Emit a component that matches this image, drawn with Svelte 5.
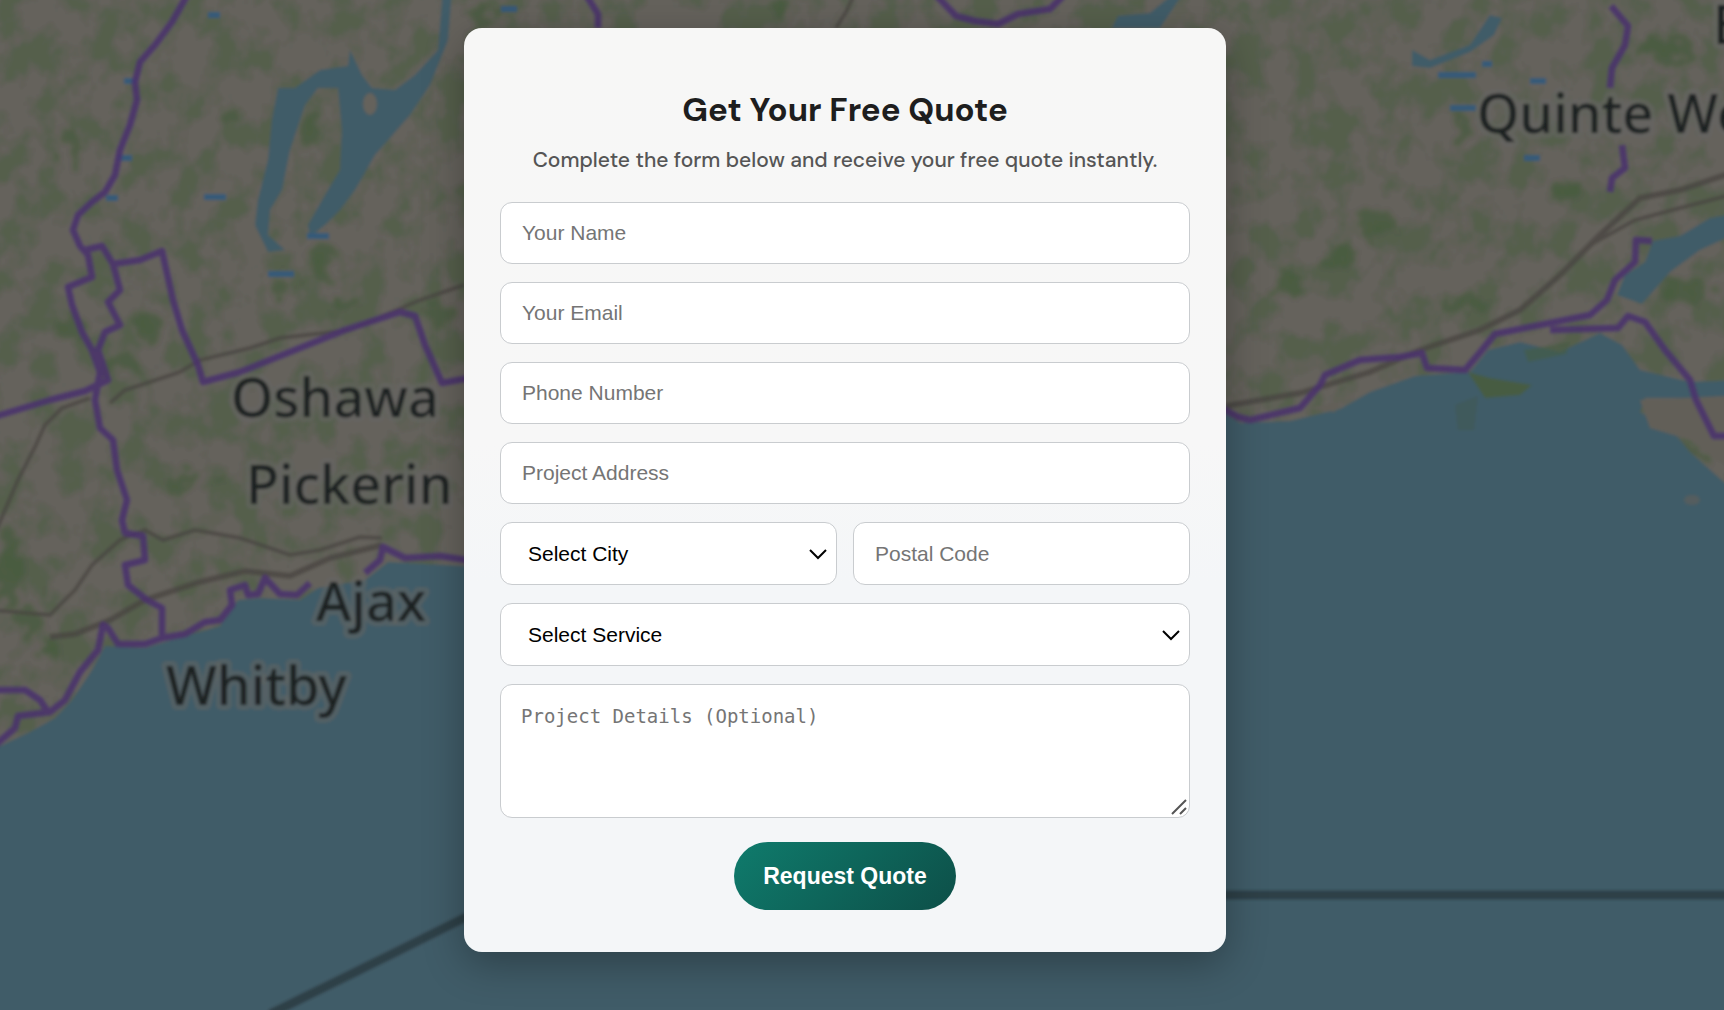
<section class="quote-section">
  <svg class="map" viewBox="0 0 1724 1010" preserveAspectRatio="xMidYMin slice" aria-hidden="true">
    <defs>
      <filter id="woods" x="0" y="0" width="100%" height="100%" color-interpolation-filters="sRGB">
        <feTurbulence type="fractalNoise" baseFrequency="0.034 0.027" numOctaves="4" seed="11" />
        <feColorMatrix values="0 0 0 0 0.29  0 0 0 0 0.36  0 0 0 0 0.26  4 0 0 0 -1.7" />
      </filter>
      <filter id="ragged" x="-5%" y="-5%" width="110%" height="110%">
        <feTurbulence type="fractalNoise" baseFrequency="0.05" numOctaves="3" seed="4" />
        <feDisplacementMap in="SourceGraphic" scale="40" xChannelSelector="R" yChannelSelector="G" />
        <feGaussianBlur stdDeviation="2" />
      </filter>
      <filter id="soft" x="0" y="0" width="100%" height="100%">
        <feGaussianBlur stdDeviation="1.8" />
      </filter>
    </defs>

    <g filter="url(#soft)">
      <rect x="-20" y="-20" width="1764" height="1050" fill="#65625c" />
      <rect x="-20" y="-20" width="1764" height="780" filter="url(#woods)" opacity="0.6" />

      <g class="forest" filter="url(#ragged)">
        {#each forests as [cx, cy, rx, ry]}
          <ellipse {cx} {cy} {rx} {ry} />
        {/each}
      </g>

      <g class="water">
        <path d="M-20 752L0 746L30 732L55 718L72 700L92 670L105 646L145 648L185 636L220 626L238 600L262 598L300 600L318 588L365 580L388 562L464 566L1226 414L1240 423L1290 421L1340 409L1370 392L1415 376L1470 372L1488 350L1520 342L1560 352L1600 333L1622 345L1640 370L1690 382L1744 380V398L1645 398L1640 412L1672 430L1690 452L1744 500V1030H-20Z" />
        <path d="M1653 241L1680 236L1710 218L1744 212V230L1700 250L1670 272L1642 304L1617 295L1625 275L1645 262Z" />
        <path d="M278 88L295 88L320 70L348 66L350 50L362 75L372 88L395 90L415 75L438 50L443 -10H452L448 40L430 85L410 115L375 155L355 190L340 210L325 225L310 237L308 225L325 195L340 170L342 130L338 88L318 88L305 105L290 150L282 190L270 210L268 235L285 250L268 252L255 225L258 200L268 160L272 120Z" />
        <path d="M1412 50L1430 60L1470 45L1490 15L1502 18L1494 35L1470 52L1430 68L1412 66Z" />
        <path d="M1118 16L1150 13L1172 -5H1182L1160 28H1112Z" />
      </g>
      <ellipse cx="370" cy="104" rx="7" ry="11" fill="#65625c" />
      <g class="shore">
        <path d="M1310 408L1340 402L1335 412Z" />
        <path d="M1640 400L1744 395V480L1690 440L1650 428Z" />
        <ellipse cx="1692" cy="500" rx="8" ry="5" opacity="0.6" />
      </g>
      <g class="island">
        <path d="M1468 372L1490 378L1532 385L1520 395L1485 398Z" />
        <path d="M1524 350L1570 342L1566 354L1528 362Z" opacity="0.6" />
        <path d="M1455 405L1478 396L1474 430H1458Z" opacity="0.3" />
      </g>

      <g class="marsh">
        {#each marshes as [x, y, width]}
          <rect {x} {y} {width} height="6" />
        {/each}
      </g>

      <g class="rail">
        <path d="M-10 545L5 510L18 480L35 447L45 425L62 408L90 398M110 403L125 390L150 382L180 372L200 360L250 348L280 338L350 330L420 300L464 285" />
        <path d="M-10 610L50 615L75 590L92 565L120 540L145 530L163 540L195 530L240 538L290 555L320 550L360 537L382 538" />
        <path class="main" d="M50 637L75 634L110 620L145 600L200 582L245 571L290 576L330 558L382 545" />
        <path class="main" d="M1226 406L1300 393L1370 372L1420 350L1480 330L1520 310L1560 275L1600 235L1640 198L1680 190L1734 172" />
        <path d="M1590 245L1635 220L1680 208L1734 194M836 28L846 12L854 -5" />
      </g>

      <g class="border">
        <path d="M189 -8L172 22L155 45L140 62L135 82L137 100L130 125L120 150L115 175L105 192L92 202L78 215L73 230L80 246L88 255L92 277L68 287L72 305L82 332L92 350L100 372L95 400L100 428L113 440L117 470L127 500L122 520L125 533L143 536L145 560L125 565L128 585L147 600L162 608L162 635" />
        <path d="M85 250L102 246L113 264L140 260L162 251L173 300L182 330L198 365L203 382L240 372L290 352L345 330L400 312L415 316L425 345L442 383L480 376" />
        <path d="M113 264L120 290L108 302L120 325L105 332L98 350L108 380L85 391L50 400L-10 418" />
        <path d="M480 562L440 556L405 558L383 547L380 560L365 573M310 583L297 595L280 594L265 578L258 594L248 595L245 585L230 590L232 605L220 620L205 622L185 634L162 638L145 644L118 644L108 628L103 625L98 650L80 672L65 700L50 712L18 716L15 728L-6 746M-6 690L25 690L40 700L48 712" />
        <path d="M586 -5L598 14V28M936 -5L956 16L975 21L998 24L1018 14L1050 9L1064 -5" />
        <path d="M1220 407L1238 417L1250 420L1300 408L1320 385L1325 375L1360 360L1400 357L1422 353L1427 368L1465 370L1482 350L1495 334L1540 325L1590 315L1607 300L1615 280L1635 262L1636 240L1652 241" />
        <path d="M1550 330L1618 328L1628 316L1645 322L1665 350L1690 380L1696 400L1714 436H1734M1611 6L1628 26L1625 45L1612 68L1610 88M1622 145L1625 168L1612 178L1610 192" />
      </g>

      <path class="boundary" d="M270 1014L390 955L464 918L520 895H1734" />

      <g class="places">
        {#each places as place}
          <text x={place.x} y={place.y}>{place.name}</text>
        {/each}
      </g>
    </g>
  </svg>

  <form class="quote-form" on:submit|preventDefault={handleSubmit}>
    <h2>Get Your Free Quote</h2>
    <p>Complete the form below and receive your free quote instantly.</p>

    <input type="text" placeholder="Your Name" aria-label="Your Name" bind:value={quote.name} />
    <input type="email" placeholder="Your Email" aria-label="Your Email" bind:value={quote.email} />
    <input type="tel" placeholder="Phone Number" aria-label="Phone Number" bind:value={quote.phone} />
    <input type="text" placeholder="Project Address" aria-label="Project Address" bind:value={quote.address} />

    <div class="form-row">
      <div class="field">
        <select aria-label="Select City" bind:value={quote.city}>
          <option value="">Select City</option>
          {#each cities as city}
            <option value={city}>{city}</option>
          {/each}
        </select>
        <svg class="chevron" viewBox="0 0 20 12" aria-hidden="true"><path d="M2 2L10 10L18 2" /></svg>
      </div>
      <input type="text" placeholder="Postal Code" aria-label="Postal Code" bind:value={quote.postal} />
    </div>

    <div class="field">
      <select aria-label="Select Service" bind:value={quote.service}>
        <option value="">Select Service</option>
      </select>
      <svg class="chevron" viewBox="0 0 20 12" aria-hidden="true"><path d="M2 2L10 10L18 2" /></svg>
    </div>

    <div class="field">
      <textarea placeholder="Project Details (Optional)" aria-label="Project Details" bind:value={quote.details}></textarea>
      <svg class="grip" viewBox="0 0 16 16" aria-hidden="true"><path d="M1 15L15 1M9 15L15 9" /></svg>
    </div>

    <button type="submit">Request Quote</button>
  </form>
</section>

<script lang="ts">
  let quote = {
    name: '',
    email: '',
    phone: '',
    address: '',
    city: '',
    postal: '',
    service: '',
    details: ''
  };

  const cities = ['Oshawa', 'Pickering', 'Ajax', 'Whitby'];

  const places = [
    { name: 'Oshawa', x: 231, y: 417 },
    { name: 'Pickerin', x: 246, y: 504 },
    { name: 'Ajax', x: 316, y: 621 },
    { name: 'Whitby', x: 166, y: 705 },
    { name: 'Quinte We', x: 1477, y: 133 },
    { name: 'B', x: 1713, y: 44 }
  ];

  // cx, cy, rx, ry
  const forests = [
    [70, 145, 9, 24], [320, 262, 14, 20], [282, 290, 12, 12], [230, 117, 10, 9],
    [345, 305, 18, 7], [150, 325, 18, 16], [75, 330, 16, 14], [120, 360, 16, 12],
    [310, 130, 8, 14], [440, 315, 12, 14], [180, 485, 12, 8], [225, 480, 10, 8],
    [30, 620, 14, 16], [50, 650, 14, 8], [10, 570, 12, 40], [1375, 222, 16, 12],
    [1462, 132, 10, 14], [1567, 190, 14, 12], [1290, 285, 14, 10], [1465, 305, 20, 9],
    [1670, 50, 26, 12], [1690, 290, 24, 14], [1690, 450, 18, 8], [1340, 260, 16, 7],
    [482, 18, 14, 12], [782, 10, 9, 12]
  ];

  // x, y, width
  const marshes = [
    [204, 194, 22], [307, 233, 22], [268, 271, 26], [208, 12, 12], [124, 78, 12],
    [118, 155, 14], [106, 195, 12], [501, 6, 16], [1438, 72, 38], [1450, 105, 26],
    [1482, 61, 10], [1524, 155, 16], [1530, 78, 16]
  ];

  function handleSubmit() {
    console.log('Quote requested', quote);
  }
</script>

<style>
  :global(body) {
    margin: 0;
    background: #405b67;
  }

  .quote-section {
    position: relative;
    display: flex;
    justify-content: center;
    align-items: flex-start;
    min-height: 100vh;
    padding: 28px 54px 28px 20px;
    box-sizing: border-box;
    overflow: hidden;
  }

  .map {
    position: absolute;
    inset: 0;
    width: 100%;
    height: 100%;
  }

  .forest {
    fill: #465a3d;
    opacity: 0.75;
  }

  .water {
    fill: #405b67;
  }

  .shore {
    fill: #625f59;
  }

  .island {
    fill: #465b42;
  }

  .marsh {
    fill: #365a78;
  }

  .rail {
    fill: none;
    stroke: #4a4742;
    stroke-width: 4;
    opacity: 0.8;
  }

  .rail .main {
    stroke-width: 6;
  }

  .border {
    fill: none;
    stroke: #4b326d;
    stroke-width: 7;
    stroke-linejoin: round;
    opacity: 0.85;
  }

  .boundary {
    fill: none;
    stroke: #2d3f47;
    stroke-width: 9;
  }

  .places {
    font-family: 'Noto Sans', sans-serif;
    font-size: 54px;
    font-weight: 500;
    fill: #1f2022;
    stroke: #66666480;
    stroke-width: 10;
    stroke-linejoin: round;
    paint-order: stroke;
  }

  .quote-form {
    position: relative;
    display: flex;
    flex-direction: column;
    gap: 18px;
    width: 100%;
    max-width: 762px;
    padding: 60px 36px 42px;
    box-sizing: border-box;
    border-radius: 18px;
    background: linear-gradient(#f7f7f6, #f7f7f7 45%, #f4f6f8 60%, #f4f6f8);
    box-shadow: 0 12px 40px rgba(0, 0, 0, 0.3);
  }

  h2 {
    margin: 0;
    font-family: 'DM Sans', Inter, sans-serif;
    font-size: 33px;
    line-height: 44px;
    font-weight: 700;
    text-align: center;
    color: #1e1e1e;
  }

  p {
    margin: -6px 0 8px;
    font-family: 'DM Sans', Inter, sans-serif;
    font-size: 21px;
    font-weight: 500;
    line-height: 32px;
    text-align: center;
    color: #555;
  }

  input,
  select,
  textarea {
    display: block;
    width: 100%;
    height: 62px;
    margin: 0;
    padding: 0 21px;
    box-sizing: border-box;
    border: 1px solid #c9cccf;
    border-radius: 12px;
    background: #fff;
    color: #000;
    font-family: Arial, 'Liberation Sans', sans-serif;
    font-size: 21px;
  }

  input::placeholder,
  textarea::placeholder {
    color: #757575;
    opacity: 1;
  }

  select,
  .form-row input {
    height: 63px;
  }

  select {
    padding: 0 27px;
    appearance: none;
  }

  textarea {
    height: 134px;
    padding: 19px 20px;
    font-family: Consolas, 'DejaVu Sans Mono', monospace;
    font-size: 19px;
    line-height: 24px;
    resize: vertical;
  }

  textarea::-webkit-resizer {
    display: none;
  }

  .form-row {
    display: grid;
    grid-template-columns: 1fr 1fr;
    gap: 16px;
  }

  .field {
    position: relative;
  }

  .chevron,
  .grip {
    position: absolute;
    fill: none;
    pointer-events: none;
  }

  .chevron {
    top: 26px;
    right: 9px;
    width: 20px;
    height: 12px;
    stroke: #000;
    stroke-width: 2;
  }

  .grip {
    right: 3px;
    bottom: 3px;
    width: 16px;
    height: 16px;
    stroke: #555;
    stroke-width: 2;
  }

  button {
    align-self: center;
    height: 68px;
    margin-top: 6px;
    padding: 0 29px;
    border: none;
    border-radius: 34px;
    background: linear-gradient(135deg, #0f7b6c, #0d4f48);
    color: #fff;
    font-family: Arial, 'Liberation Sans', sans-serif;
    font-size: 23px;
    font-weight: 700;
    cursor: pointer;
  }
</style>
